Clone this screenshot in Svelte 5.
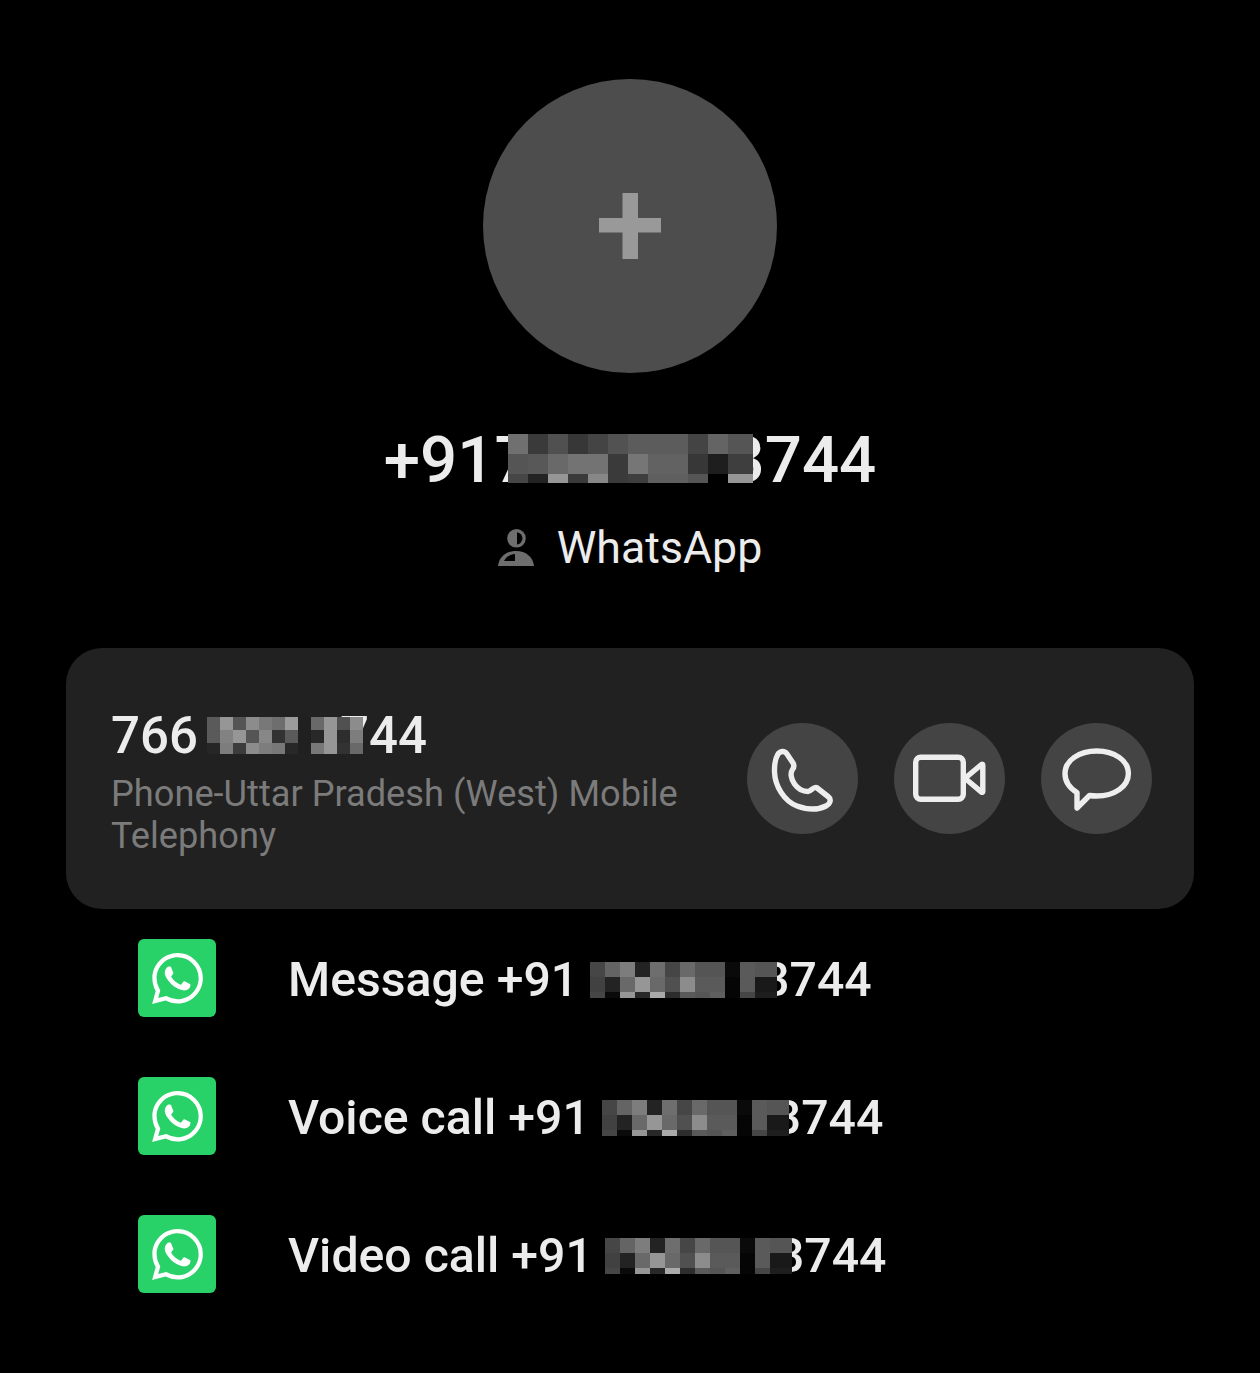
<script>
  const title = [112,58,80,55,68,82,92,92,92,68,100,85, 85,88,105,115,115,58,118,98,98,55,30,62, 70,35,150,58,135,58,62,95,95,85,0,150];
  const card = [90,150,85,140,120,110,155,32,105,150,80,140, 90,130,150,85,135,50,90,32,40,150,45,125, 38,125,60,140,125,120,40,32,120,150,50,105];
  const row = [70,100,125,35,110,70,105,85,85,10,90,85, 65,35,105,150,105,80,140,90,90,5,90,25, 70,10,150,40,170,45,90,85,95,5,70,30];
  const actions = [
    { fn: 'call' }, { fn: 'video' }, { fn: 'chat' }
  ];
  const items = ['Message', 'Voice call', 'Video call'];
  const gray = (v) => `rgb(${v},${v},${v})`;
</script>

{#snippet mosaic(cells, kind)}
  <span class="mosaic {kind}" aria-hidden="true">
    {#each cells as v}
      <i style:background={gray(v)}></i>
    {/each}
  </span>
{/snippet}

<main class="page">
  <div class="avatar">
    <svg width="62" height="66" viewBox="0 0 62 66"><path d="M23.500 0H39V25H62V39.500H39V66H23.500V39.500H0V25H23.500z" fill="#999"/></svg>
  </div>

  <h1 class="name">
    <span>+917</span>
    {@render mosaic(title, 'm-title')}
    <span>3744</span>
  </h1>

  <div class="source">
    <svg width="36" height="38" viewBox="0 0 36 38">
      <circle cx="18.500" cy="9.300" r="9.300" fill="#6e6e6e"/>
      <path d="M19 3.200a6.200 6.200 0 0 1 0 12.300z" fill="#000"/>
      <path d="M0 37C1 28 8 22 18 22S35 28 36 37z" fill="#6e6e6e"/>
      <path d="M6 32C8 28 12 25.500 17 25V32z" fill="#000"/>
    </svg>
    <span>WhatsApp</span>
  </div>

  <section class="card">
    <div class="info">
      <div class="number">
        <span>766</span>
        {@render mosaic(card, 'm-card')}
        <span>744</span>
      </div>
      <div class="desc">Phone-Uttar Pradesh (West) Mobile Telephony</div>
    </div>
    <div class="actions">
      {#each actions as a}
        <button class="round" aria-label={a.fn}>
          <svg width="111" height="111" viewBox="0 0 111 111" fill="none" stroke="#eee" stroke-width="5.400" stroke-linejoin="round" stroke-linecap="round">
            {#if a.fn === 'call'}
              <path d="M30.500 32C33 27.500 37.500 27.500 40 31L46 40C47.500 42.500 47 44.500 45.500 46.500C43 50 44 56 47.500 61C51 66 56.500 68.500 61 68.500C64.500 68.500 66 63.500 69.500 64.500L81 73.500C85 76.500 83 81 79 83C72 86.500 61 87 50 83C37 78 28 63 27.500 49C27.300 42 28 36.500 30.500 32Z"/>
            {:else if a.fn === 'video'}
              <rect x="21.700" y="34.300" width="47.600" height="42" rx="5"/>
              <path d="M71 55.300L87.500 41.500C88.300 41 88.800 41.400 88.800 42.200V68.500C88.800 69.300 88.300 69.600 87.500 69.100Z"/>
            {:else}
              <path d="M36 85V69.500C28.500 65 24 58.500 24 50.500C24 37.500 38 28 55.700 28C73.500 28 87.400 37.500 87.400 50.500C87.400 63.500 73.500 73 55.700 73C53 73 50.500 72.800 48.500 72.500Z"/>
            {/if}
          </svg>
        </button>
      {/each}
    </div>
  </section>

  <ul class="list">
    {#each items as label}
      <li>
        <span class="wa">
          <svg width="51" height="51" viewBox="0 0 24 24"><path fill="#fff" d="M17.472 14.382c-.297-.149-1.758-.867-2.03-.967-.273-.099-.471-.148-.67.15-.197.297-.767.966-.94 1.164-.173.199-.347.223-.644.075-.297-.15-1.255-.463-2.39-1.475-.883-.788-1.48-1.761-1.653-2.059-.173-.297-.018-.458.13-.606.134-.133.298-.347.446-.52.149-.174.198-.298.298-.497.099-.198.05-.371-.025-.52-.075-.149-.669-1.612-.916-2.207-.242-.579-.487-.5-.669-.51-.173-.008-.371-.01-.57-.01-.198 0-.52.074-.792.372-.272.297-1.04 1.016-1.04 2.479 0 1.462 1.065 2.875 1.213 3.074.149.198 2.096 3.2 5.077 4.487.709.306 1.262.489 1.694.625.712.227 1.36.195 1.871.118.571-.085 1.758-.719 2.006-1.413.248-.694.248-1.289.173-1.413-.074-.124-.272-.198-.57-.347m-5.421 7.403h-.004a9.87 9.87 0 01-5.031-1.378l-.361-.214-3.741.982.998-3.648-.235-.374a9.86 9.86 0 01-1.51-5.26c.001-5.45 4.436-9.884 9.888-9.884 2.64 0 5.122 1.03 6.988 2.898a9.825 9.825 0 012.893 6.994c-.003 5.45-4.437 9.884-9.885 9.884m8.413-18.297A11.815 11.815 0 0012.05 0C5.495 0 .16 5.335.157 11.892c0 2.096.547 4.142 1.588 5.945L.057 24l6.305-1.654a11.882 11.882 0 005.683 1.448h.005c6.554 0 11.89-5.335 11.893-11.893a11.821 11.821 0 00-3.48-8.413z"/></svg>
        </span>
        <span class="line">
          <span class="label">{label} +91</span>
          {@render mosaic(row, 'm-row')}
          <span>3744</span>
        </span>
      </li>
    {/each}
  </ul>
</main>

<style>
  :global(body) { background: #000; }
  .page {
    height: 1373px;
    box-sizing: border-box;
    padding: 79px 66px 0;
    background: #000;
    color: #ececec;
    font-family: Roboto, "Noto Sans", sans-serif;
    overflow: hidden;
  }
  .avatar {
    width: 294px;
    height: 294px;
    margin: 0 auto;
    border-radius: 50%;
    background: #4d4d4d;
    display: flex;
    align-items: center;
    justify-content: center;
  }
  .name {
    margin: 48px 0 0;
    height: 78px;
    display: flex;
    justify-content: center;
    align-items: center;
    font-size: 65.400px;
    font-weight: 500;
    line-height: 78px;
  }
  .source {
    margin-top: 22px;
    height: 54px;
    display: flex;
    justify-content: center;
    align-items: center;
    gap: 23px;
    font-size: 44.700px;
    line-height: 54px;
  }
  .card {
    margin-top: 73px;
    height: 261px;
    box-sizing: border-box;
    padding: 0 42px 1px 45px;
    background: #212121;
    border-radius: 36px;
    display: flex;
    justify-content: space-between;
    align-items: center;
  }
  .info { width: 590px; padding-top: 7px; }
  .number {
    display: flex;
    align-items: center;
    font-size: 51px;
    font-weight: 500;
    line-height: 60px;
    height: 60px;
    margin-top: -1px;
  }
  .desc {
    margin-top: 7px;
    font-size: 36.200px;
    line-height: 42px;
    color: #7b7b7b;
  }
  .actions { display: flex; gap: 36px; }
  .round {
    width: 111px;
    height: 111px;
    padding: 0;
    border: 0;
    border-radius: 50%;
    background: #444;
  }
  .round svg { display: block; }
  .list {
    list-style: none;
    margin: 30px 0 0;
    padding: 0 0 0 72px;
    display: flex;
    flex-direction: column;
    gap: 60px;
  }
  .list li {
    display: flex;
    align-items: center;
    gap: 72px;
    height: 78px;
  }
  .wa {
    width: 78px;
    height: 78px;
    border-radius: 6px;
    background: #29d268;
    display: flex;
    align-items: center;
    justify-content: center;
  }
  .line {
    display: flex;
    align-items: center;
    font-size: 48.200px;
    font-weight: 500;
    line-height: 56px;
    padding-top: 4px;
  }
  .label { margin-right: 12px; }
  .mosaic {
    display: inline-grid;
    grid-auto-flow: row;
    position: relative;
    z-index: 1;
    flex: none;
  }
  .m-title {
    grid-template-columns: repeat(11, 20px) 25px;
    grid-template-rows: 20px 20px 9px;
    margin: -4px -25px 0 -24px;
  }
  .m-card {
    grid-template-columns: repeat(12, 13px);
    grid-template-rows: 13px 13px 11px;
    margin: 0 -23px 0 9px;
  }
  .m-row {
    grid-template-columns: repeat(11, 15px) 22px;
    grid-template-rows: 15px 15px 6px;
    margin-right: -15px;
  }
</style>
